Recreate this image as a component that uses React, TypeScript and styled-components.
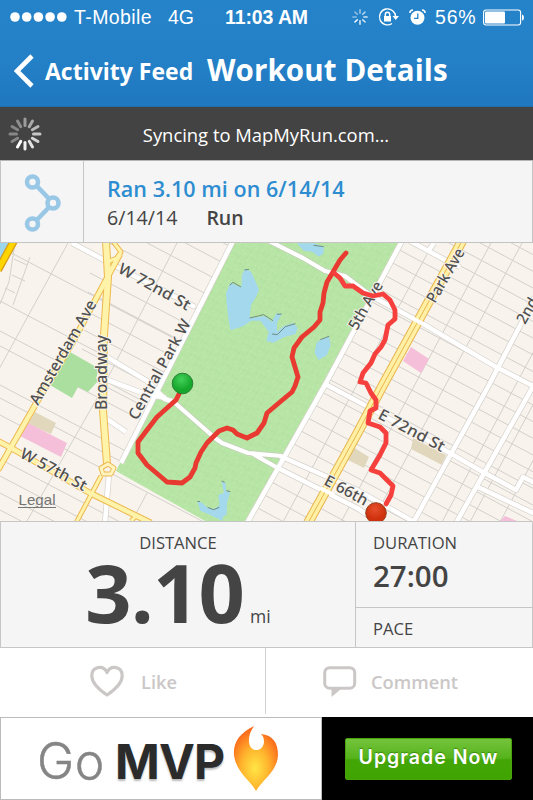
import React from "react";
import styled, { createGlobalStyle } from "styled-components";

const GlobalStyle = createGlobalStyle`
  *, *::before, *::after { box-sizing: border-box; }
  body { margin: 0; background: #fff; overflow: hidden; }
`;

const sans = `"Open Sans", "Noto Sans", sans-serif`;
const system = `"Liberation Sans", Arial, sans-serif`;

const Screen = styled.main`
  display: flex;
  flex-direction: column;
  width: 533px;
  height: 800px;
  overflow: hidden;
  font-family: ${sans};
  color: #444;
`;

const Header = styled.header`
  flex: 0 0 107px;
  color: #fff;
  background: linear-gradient(#2583ca 0%, #2481c8 50%, #2078bf 100%);
  border-bottom: 1px solid #1f6eae;
`;

const StatusBar = styled.div`
  display: grid;
  grid-template-columns: 225px 125px 1fr;
  align-items: center;
  height: 34px;
  font: 19.5px/34px ${system};
`;

const StatusGroup = styled.div<{ $start?: number }>`
  display: flex;
  align-items: center;
  padding-left: ${(p) => p.$start ?? 0}px;
  height: 34px;
`;

const Label = styled.span<{ $size: number; $weight?: number; $spacing?: number; $gap?: number }>`
  font-size: ${(p) => p.$size}px;
  font-weight: ${(p) => p.$weight ?? 400};
  letter-spacing: ${(p) => p.$spacing ?? 0}px;
  margin-left: ${(p) => p.$gap ?? 0}px;
  white-space: nowrap;
`;

const StatusIcon = styled.svg<{ $gap?: number }>`
  flex: none;
  margin-left: ${(p) => p.$gap ?? 0}px;
  overflow: visible;
`;

const NavBar = styled.nav`
  display: flex;
  align-items: center;
  height: 72px;
  padding-left: 14px;
`;

const BackButton = styled.button`
  display: flex;
  align-items: center;
  width: 193px;
  padding: 2px 0 0;
  border: 0;
  background: none;
  color: inherit;
  font-family: inherit;
`;

const Title = styled.h1`
  margin: 0;
  padding-bottom: 2px;
  font-size: 29.5px;
  font-weight: 700;
  letter-spacing: 0.1px;
  white-space: nowrap;
`;

const SyncBar = styled.div`
  display: grid;
  grid-template-columns: 50px 432px 1fr;
  align-items: center;
  flex: 0 0 53px;
  color: #fff;
  background: #434343;
  text-align: center;
`;

const SyncText = styled.div`
  padding-top: 1px;
`;

const Activity = styled.section`
  display: grid;
  grid-template-columns: 83px 1fr;
  flex: 0 0 83px;
  background: #f5f5f5;
  border: 1px solid #c4c4c4;
  border-top-color: #b5b5b5;
`;

const RouteBadge = styled.div`
  display: flex;
  align-items: center;
  justify-content: center;
  padding-top: 2px;
  border-right: 1px solid #c6c6c6;
`;

const ActivityInfo = styled.div`
  padding: 13px 0 0 23px;
`;

const ActivityTitle = styled.h2`
  margin: 0;
  color: #2d8dd0;
  font-size: 21.5px;
  line-height: 29px;
  font-weight: 600;
  letter-spacing: 0.05px;
`;

const ActivityMeta = styled.div`
  display: flex;
  line-height: 30px;
`;

const MapArea = styled.div`
  flex: 0 0 278px;
  background: #f8f4ed;
`;

const MapSvg = styled.svg`
  display: block;
  width: 533px;
  height: 278px;
`;

const Stats = styled.section`
  display: grid;
  grid-template-columns: 355px 1fr;
  grid-template-rows: 125px;
  flex: 0 0 127px;
  background: #f5f5f5;
  border: 1px solid #c6c6c6;
`;

const DistanceCell = styled.div`
  display: flex;
  flex-direction: column;
  align-items: center;
  border-right: 1px solid #c6c6c6;
`;

const StatName = styled.div`
  padding-top: 9px;
  font-size: 16.6px;
  line-height: 24px;
`;

const DistanceValue = styled.div`
  display: flex;
  align-items: baseline;
  height: 76px;
  line-height: 74px;
`;

const Unit = styled.span`
  margin-left: 6px;
  font-size: 17.5px;
  line-height: 1;
`;

const SideCell = styled.div<{ $height: number; $divided?: boolean }>`
  height: ${(p) => p.$height}px;
  padding-left: 17px;
  border-bottom: ${(p) => (p.$divided ? "1px solid #c6c6c6" : "0")};
`;

const Duration = styled.div`
  padding-top: 3px;
  font-size: 29.5px;
  line-height: 36px;
  font-weight: 600;
`;

const Actions = styled.div`
  display: grid;
  grid-template-columns: 266px 1fr;
  flex: 0 0 69px;
  background: #fff;
`;

const ActionButton = styled.button<{ $start: number; $divided?: boolean }>`
  display: flex;
  align-items: center;
  height: 66px;
  padding: 0 0 0 ${(p) => p.$start}px;
  border: 0;
  border-right: ${(p) => (p.$divided ? "1px solid #d2d2d2" : "0")};
  background: none;
  color: #cbc7c7;
  font-family: inherit;
`;

const Banner = styled.aside`
  display: grid;
  grid-template-columns: 322px 1fr;
  grid-template-rows: 83px;
  flex: 0 0 83px;
`;

const Brand = styled.div`
  display: flex;
  align-items: center;
  padding-left: 36px;
  border: 1px solid #bbb;
  background: #fff;
`;

const GoWord = styled.span`
  width: 78px;
  font: 300 50px/72px Inter, sans-serif;
  letter-spacing: 0.5px;
  color: #858585;
  -webkit-text-stroke: 0.4px #858585;
  padding-top: 4px;
`;

const MvpWord = styled.span`
  width: 117px;
  font: 700 48px/72px Inter, sans-serif;
  letter-spacing: -0.8px;
  color: #2b2b2b;
  padding-top: 6px;
  text-shadow: 0 2px 2px #bbb;
`;

const UpgradeArea = styled.div`
  display: flex;
  align-items: center;
  padding: 1px 0 0 23px;
  background: #000;
`;

const UpgradeButton = styled.button`
  width: 167px;
  height: 42px;
  padding: 0 0 5px;
  border: 1px solid #4aa30d;
  border-radius: 2px;
  color: #fff;
  background: linear-gradient(#74c33c 0%, #55b31b 48%, #43a606 52%, #3fa400 100%);
  font: 600 19.5px/34px Inter, sans-serif;
  letter-spacing: 1px;
  text-shadow: 0 -1px 1px #378b08;
  white-space: nowrap;
`;

const Spokes = ({ count, inner, outer, width, lit }: { count: number; inner: number; outer: number; width: number; lit: number }) => (
  <g stroke="#fff" strokeWidth={width} strokeLinecap="round">
    {Array.from({ length: count }, (_, i) => {
      const step = (i - lit + count) % count;
      return (
        <line key={i} x1="0" x2="0" y1={-inner} y2={-outer} opacity={Math.max(0.36, 1 - step * 0.075)}
          transform={`rotate(${(-i * 360) / count})`} />
      );
    })}
  </g>
);

const range = (n: number) => Array.from({ length: n }, (_, i) => i);

// x positions of the thin avenues at the top edge of the map, east of the park
const eastAvenues = [433, 491, 522, 564, 592, 620, 650];

const parkRoad =
  "M269 241L303 258L325 271L345 276L354 283L373 297M175 403L215 438L222 443L248 453L282 456M253 454L276 467";

const whiteRoads = [
  "M233 241L121 463M109 474L105 523",
  "M402 241L325 385L247 523",
  "M72 243L121 269L195 307M107 357L147 381L165 399L177 403",
  "M97 376L145 394L166 398M107 419L126 432",
  "M373 297L420 322L496 367L535 387",
  "M325 384L372 409L450 453L483 472L516 490L523 477L535 483",
  "M535 297L489 385L413 523M535 383L456 523",
  "M280 456L357 490L400 514L416 523M276 467L357 508L380 523",
  "M478 487L535 514M410 241L447 261L460 267M434 243L429 250",
];
const yellowRoads: [string, number][] = [
  ["M-2 441L13 449L90 493L151 523", 4.5],
  ["M106 241L108 277L104 335L103 410L107 464", 6],
  ["M120 254L106 280L75 338L38 400L-2 470", 4.5],
  ["M112 240L121 252L117 258L107 262M101 476L76 523M131 521L137 515", 3],
];
// name, x, y, rotation, length
const legends: [string, number, number, number, number][] = [
  ["W 72nd St", 117, 272, 29, 80],
  ["Amsterdam Ave", 38, 406, -60, 118],
  ["Broadway", 107, 410, -90, 75],
  ["Central Park W", 137, 421, -61, 112],
  ["W 57th St", 19, 457, 28, 73],
  ["5th Ave", 357, 331, -60, 53],
  ["Park Ave", 435, 304, -60, 60],
  ["2nd", 525, 325, -60, 27],
  ["E 72nd St", 377, 418, 28, 73],
  ["E 66th", 323, 484, 28, 47],
];

const RouteMap = () => (
  <MapSvg viewBox="0 243 533 278">
    <defs>
      <clipPath id="west"><path d="M0 243H233L116 471L205 521H0Z" /></clipPath>
      <clipPath id="east"><path d="M402 243H533V521H247Z" /></clipPath>
      <pattern id="grass" width="13" height="11" patternUnits="userSpaceOnUse" patternTransform="rotate(-24)">
        <rect width="13" height="11" fill="#b7e5a5" />
        <path d="M1 2l4-1M7 5l3 1M2 9l3-1M10 9l2-1" stroke="#c2e9ae" strokeWidth="1" />
        <path d="M8 2l3-1M3 6l2-1M7 9l2 0" stroke="#acdc99" strokeWidth=".8" />
      </pattern>
      <radialGradient id="greenPin" cx=".45" cy=".3"><stop offset="0" stopColor="#43d05a" /><stop offset="1" stopColor="#16a82c" /></radialGradient>
      <radialGradient id="redPin" cx=".45" cy=".3"><stop offset="0" stopColor="#e64f2c" /><stop offset="1" stopColor="#cf310d" /></radialGradient>
    </defs>
    <rect y="243" width="533" height="278" fill="#f8f4ed" />
    <g stroke="#d3cfcb" strokeWidth="1" fill="none">
      <g clipPath="url(#west)">
        {range(11).map((i) => <path key={i} d={`M${100 - i * 2} ${178 + i * 19}l190 100`} />)}
        {[247, 301, 331, 346, 385, 398, 415, 459, 476, 493, 510].map((y) => <path key={y} d={`M0 ${y}l240 126`} />)}
        <path d="M68 243L-2 371M177 243L100 393L27 521M147 493L132 521M15 243L9 282L0 304M30 257L13 305M14 259l13 6M12 275l13 6M5 288l10 5" />
      </g>
      <g clipPath="url(#east)">
        {range(28).map((i) => <path key={i} d={`M240 ${81 + i * 16.7}l310 166`} />)}
        {eastAvenues.map((x) => <path key={x} d={`M${x} 243l-150 279`} />)}
      </g>
    </g>
    <path d="M0 243H13L0 269Z" fill="#9cd6ed" />
    <path d="M15 239L-2 270" stroke="#d79b16" strokeWidth="8" /><path d="M15 239L-2 270" stroke="#ffd500" strokeWidth="5.5" />
    <path d="M70 352L98 368L97 382L88 392L78 387L72 398L50 385Z" fill="#abdfa0" />
    <path d="M35 412L56 423L51 434L28 424ZM413 438L446 455L442 465L411 449ZM353 447L369 457L364 468L348 460Z" fill="#e1d7bd" />
    <path d="M28 423L67 443L61 457L20 436ZM411 347L429 359L421 373L403 361ZM500 521L505 516L517 521Z" fill="#f5bfda" />
    <path d="M233 243H400L247 521H205L116 471Z" fill="url(#grass)" />
    <g transform="translate(177 240) scale(.33333)" fill="#a3d8ed">
      <path d="M205 86L222 95L236 125L246 150L235 175L222 195L218 232L240 232L262 228L285 245L298 220L314 222L300 248L300 275L320 258L350 248L362 265L355 282L320 292L290 308L268 303L275 275L250 242L222 242L200 258L160 271L155 240L150 200L147 160L160 128L193 142L195 105Z" />
      <path d="M430 299L456 289L461 315L450 345L425 360L413 340L418 310ZM360 10H410L440 20L440 40L425 50L405 35L380 32Z" />
      <path d="M134 723L146 730L147 752L159 757L150 790L149 823L138 830L136 842L100 825L70 812L61 784L75 788L90 802L110 808L128 795L124 765L141 758Z" />
      <g fill="none" stroke="#647d6c" strokeWidth="2.5">
        <path d="M158 136l10-9l24 14M202 90l14-2M218 234l42-10l28 18M300 223l14-1M285 282l16 2l24-24l30-9M430 299l26-10M410 16l30 4M61 784l8 1M92 802l18 7l17-7M148 752l12 3M134 723l9 4" />
      </g>
    </g>
    <g fill="none" strokeLinejoin="round">
      <path d={parkRoad} stroke="#c5c9bb" strokeWidth="5.4" />
      {whiteRoads.map((d) => <path key={d} d={d} stroke="#d6d2cd" strokeWidth="6" />)}
      {whiteRoads.map((d) => <path key={d} d={d} stroke="#fff" strokeWidth="4.6" />)}
      <path d={parkRoad} stroke="#fff" strokeWidth="4.2" />
      {yellowRoads.map(([d, w]) => <path key={d} d={d} stroke="#edb84f" strokeWidth={w + 2} />)}
      {yellowRoads.map(([d, w]) => <path key={d} d={d} stroke="#fff2a9" strokeWidth={w} />)}
      <path d="M462 241L383 385L357 434L308 523" stroke="#e8b54e" strokeWidth="10" />
      <path d="M462 241L383 385L357 434L308 523" stroke="#fff0a5" strokeWidth="8" />
      <path d="M462 241L383 385L357 434L308 523" stroke="#e8b54e" strokeWidth="1" />
      <path d="M108 464L114 468L111 474L103 474L101 468Z" fill="#f8f4ed" stroke="#edb84f" strokeWidth="5" />
      <path d="M108 464L114 468L111 474L103 474L101 468Z" stroke="#fff4bd" strokeWidth="3" />
      <path d="M412 318L429 327M320 488L334 495" stroke="#fff" strokeWidth="4" />
    </g>
    <g fill="#505050" stroke="#f8f4ed" strokeWidth="2" paintOrder="stroke" fontFamily='"Noto Sans", sans-serif' fontSize="15.5" fontWeight="500">
      {legends.map(([name, x, y, angle, length]) => (
        <text key={name} transform={`translate(${x} ${y}) rotate(${angle})`} textLength={length} lengthAdjust="spacingAndGlyphs">{name}</text>
      ))}
    </g>
    <text x="18.5" y="505" textLength="37" lengthAdjust="spacingAndGlyphs" fill="#747474" fontFamily="Liberation Sans, sans-serif" fontSize="15">Legal</text>
    <path d="M18 507.5H56" stroke="#777" strokeWidth="1" />
    <g fill="none" stroke="#e83a31" strokeWidth="4.8" strokeLinejoin="round" strokeLinecap="round">
      <path d="M346 253L340 260L333 272L327 282L324 293L323 303L320 312L320 320L314 327L302 337L294 348L292 357L295 367L298 377L295 386L292 392L280 402L267 413L264 423L257 433L247 438L237 434L233 430L227 428L219 431L207 443L201 452L196 463L195 468L190 477L182 483L167 482L147 465L138 453L138 442L147 430L157 417L167 408L176 400L182 388" />
      <path stroke="#f5403d" d="M334 273L340 278L345 286L353 286L363 293L373 296L383 294L390 300L395 310L395 319L388 325L385 340L381 347L375 354L371 363L363 373L360 382L366 383L371 393L376 400L376 408L370 411L368 423L380 427L386 433L386 443L380 455L371 470L380 473L393 486L391 495L386 504" />
    </g>
    <circle cx="182.5" cy="383.5" r="10.3" fill="url(#greenPin)" stroke="#277c34" strokeWidth="1" />
    <circle cx="376" cy="513" r="10.3" fill="url(#redPin)" stroke="#94401f" strokeWidth="1" />
  </MapSvg>
);

export default function App() {
  return (
    <Screen>
      <GlobalStyle />
      <Header>
        <StatusBar>
          <StatusGroup $start={10}>
            <StatusIcon width="56" height="10" viewBox="0 0 56 10" fill="#fff">
              {range(5).map((i) => <circle key={i} cx={5 + i * 11.7} cy="5" r="4.8" />)}
            </StatusIcon>
            <Label $size={19.5} $gap={8} $spacing={0.4}>T-Mobile</Label>
            <Label $size={19.5} $gap={16}>4G</Label>
          </StatusGroup>
          <Label $size={19.5} $weight={700} $spacing={-0.1}>11:03 AM</Label>
          <StatusGroup $start={2}>
            <StatusIcon width="16" height="16" viewBox="-8 -8 16 16">
              <Spokes count={8} inner={3.8} outer={7.2} width={1.4} lit={3} />
            </StatusIcon>
            <StatusIcon $gap={11} width="20" height="18" viewBox="0 0 20 18" fill="none" stroke="#fff" strokeWidth="1.4">
              <path d="M16.5 9A8 8 0 1 0 13 15.5M16.5 8A8 8 0 0 0 15.8 5" /><path d="M13.5 8H20L16.7 12Z" fill="#fff" stroke="none" />
              <rect x="5" y="8" width="7" height="5.5" fill="#fff" stroke="none" /><path d="M6.3 8V6.5a2.2 2.2 0 0 1 4.4 0V8" />
            </StatusIcon>
            <StatusIcon $gap={10} width="17" height="17" viewBox="0 0 17 17">
              <circle cx="8.5" cy="8.8" r="7" fill="#fff" /><path d="M8.8 4.5V9.3H5" stroke="#2481c8" strokeWidth="1.3" fill="none" />
              <path d="M.8 3.8Q1.2 1.2 4 1M13 1Q15.8 1.2 16.2 3.8" stroke="#fff" strokeWidth="1.6" fill="none" />
            </StatusIcon>
            <Label $size={19.5} $gap={9} $spacing={0.8}>56%</Label>
            <StatusIcon $gap={7} width="42" height="17" viewBox="0 0 42 17" fill="none" stroke="#fff">
              <rect x=".6" y="1" width="37" height="15" rx="2.5" strokeWidth="1.1" /><rect x="2" y="2.5" width="20" height="12" rx="1" fill="#fff" stroke="none" />
              <path d="M39 5.5Q41 6 41 8.5T39 11.5Z" fill="#fff" stroke="none" />
            </StatusIcon>
          </StatusGroup>
        </StatusBar>
        <NavBar>
          <BackButton>
            <svg width="21" height="34" viewBox="0 0 21 34" fill="none" stroke="#fff" strokeWidth="4.6"><path d="M18 2L3 17L18 32" /></svg>
            <Label $size={23} $weight={700} $gap={10}>Activity Feed</Label>
          </BackButton>
          <Title>Workout Details</Title>
        </NavBar>
      </Header>
      <SyncBar>
        <svg width="50" height="36" viewBox="-25 -18 50 36"><Spokes count={12} inner={8.5} outer={15} width={3} lit={5} /></svg>
        <SyncText><Label $size={18.4}>Syncing to MapMyRun.com...</Label></SyncText>
      </SyncBar>
      <Activity>
        <RouteBadge>
          <svg width="40" height="60" viewBox="0 0 40 60" fill="#f5f5f5" stroke="#99c8e7" strokeWidth="4.6">
            <path d="M11 9L31 30L11 51" fill="none" />
            <circle cx="10.5" cy="9" r="5.5" /><circle cx="31" cy="30" r="5.5" /><circle cx="10.5" cy="51" r="5.5" />
          </svg>
        </RouteBadge>
        <ActivityInfo>
          <ActivityTitle>Ran 3.10 mi on 6/14/14</ActivityTitle>
          <ActivityMeta>
            <Label $size={19.6}>6/14/14</Label>
            <Label $size={19.5} $weight={600} $gap={29}>Run</Label>
          </ActivityMeta>
        </ActivityInfo>
      </Activity>
      <MapArea><RouteMap /></MapArea>
      <Stats>
        <DistanceCell>
          <StatName>DISTANCE</StatName>
          <DistanceValue>
            <Label $size={81} $weight={700} $spacing={-0.8}>3.10</Label>
            <Unit>mi</Unit>
          </DistanceValue>
        </DistanceCell>
        <div>
          <SideCell $height={86} $divided>
            <StatName>DURATION</StatName>
            <Duration>27:00</Duration>
          </SideCell>
          <SideCell $height={39}><StatName>PACE</StatName></SideCell>
        </div>
      </Stats>
      <Actions>
        <ActionButton $start={90} $divided>
          <svg width="34" height="32" viewBox="0 0 34 32" fill="none" stroke="#cbc7c7" strokeWidth="3.2" strokeLinejoin="round">
            <path d="M17 30Q1.8 20 1.8 10.8C1.8 1.5 13 -.5 17 7.5C21 -.5 32.2 1.5 32.2 10.8Q32.2 20 17 30Z" />
          </svg>
          <Label $size={18.3} $weight={600} $gap={17}>Like</Label>
        </ActionButton>
        <ActionButton $start={57}>
          <svg width="34" height="32" viewBox="0 0 34 32" fill="none" stroke="#cbc7c7" strokeWidth="3">
            <rect x="1.7" y="2.7" width="30" height="20.5" rx="5" /><path d="M8.5 23V32L18 24Z" fill="#cbc7c7" stroke="none" />
          </svg>
          <Label $size={18.3} $weight={600} $gap={14}>Comment</Label>
        </ActionButton>
      </Actions>
      <Banner>
        <Brand>
          <GoWord>Go</GoWord>
          <MvpWord>MVP</MvpWord>
          <svg width="48" height="68" viewBox="0 0 48 68">
            <defs>
              <radialGradient id="flame" cx=".48" cy=".65" r=".6">
                <stop offset="0" stopColor="#ffe545" /><stop offset=".5" stopColor="#ffb62e" /><stop offset="1" stopColor="#fb6b1b" />
              </radialGradient>
            </defs>
            <path d="M22 1C8 8 1 17 2 30C4 47 18 55 24 66C31 54 45 47 46 30C46 18 41 10 29 9C34 13 33 25 24 25C16 25 14 12 22 1Z" fill="url(#flame)" />
          </svg>
        </Brand>
        <UpgradeArea><UpgradeButton>Upgrade Now</UpgradeButton></UpgradeArea>
      </Banner>
    </Screen>
  );
}
